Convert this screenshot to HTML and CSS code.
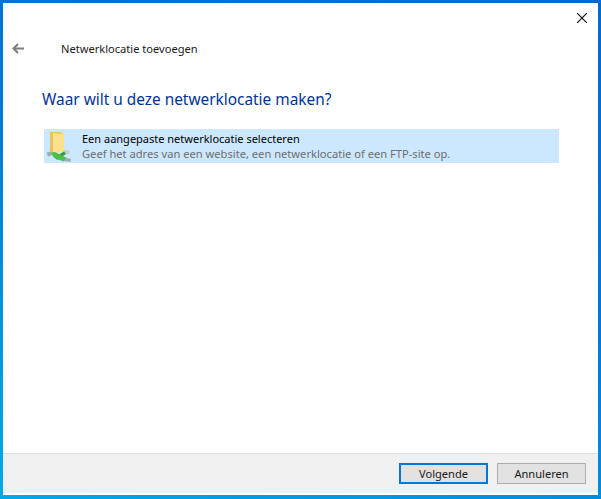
FILE: index.html
```html
<!DOCTYPE html>
<html>
<head>
    <title>Netwerklocatie toevoegen</title>
    <link rel="stylesheet" href="styles.css">
</head>
<body>
    <div class="window">
        <div class="close-row">
            <svg class="close-icon" width="10" height="10" viewBox="0 0 10 10">
                <path d="M0 0L10 10M10 0L0 10" stroke="#111" stroke-width="1.2" fill="none"/>
            </svg>
        </div>
        <div class="title-row">
            <svg class="back-icon" width="12" height="11" viewBox="0 0 12 11">
                <path d="M12 5.5H1.5M6 1L1.5 5.5L6 10" stroke="#7d7d7d" stroke-width="2" fill="none"/>
            </svg>
            <span class="title">Netwerklocatie toevoegen</span>
        </div>
        <div class="content">
            <h1>Waar wilt u deze netwerklocatie maken?</h1>
            <div class="option">
                <svg class="option-icon" width="26" height="33" viewBox="0 0 26 33">
                    <path d="M4 2H14L18 4V22H4Z" fill="#e9c25f"/>
                    <path d="M7 3L18 4V22L7 23Z" fill="#fbe08d"/>
                    <path d="M0.5 22.5L5 21.5L7 25L2 26.5Z" fill="#a3ada7"/>
                    <path d="M19 27.5L25 29L24.5 32L18 31Z" fill="#a3ada7"/>
                    <path d="M18 20L24 21L23 24L17 23.5Z" fill="#c3ccc6"/>
                    <path d="M9 27L18 21.5L20 24L11 30Z" fill="#2f9e35"/>
                    <path d="M5 22.5L9 22L20 27.5L18 31.5L8 28Z" fill="#4fbe48"/>
                </svg>
                <div class="option-text">
                    <div class="option-title">Een aangepaste netwerklocatie selecteren</div>
                    <div class="option-desc">Geef het adres van een website, een netwerklocatie of een FTP-site op.</div>
                </div>
            </div>
        </div>
        <div class="footer">
            <button class="btn btn-default" type="button">Volgende</button>
            <button class="btn" type="button">Annuleren</button>
        </div>
    </div>
</body>
</html>
```

FILE: styles.css
```css
html, body {
    height: 100%;
}

body {
    margin: 0;
    box-sizing: border-box;
    padding: 3px 3px 4px 3px;
    background: linear-gradient(200deg, #0069d0 0%, #0078d7 45%, #00a8ea 100%);
    font-family: "Noto Sans", sans-serif;
    overflow: hidden;
}

.window {
    height: 100%;
    display: flex;
    flex-direction: column;
    background-color: #fff;
}

.close-row {
    display: flex;
    justify-content: flex-end;
    padding: 10px 11px 0 0;
}

.close-icon {
    display: block;
}

.title-row {
    display: flex;
    align-items: center;
    height: 20px;
    margin-top: 15px;
    padding-left: 9px;
}

.back-icon {
    display: block;
}

.title {
    margin-left: 37px;
    font-size: 11.1px;
    color: #1a1a1a;
}

.content {
    flex: 1;
    padding: 0 39px;
}

h1 {
    margin: 31px 0 18px 0;
    font-size: 15.4px;
    line-height: 22px;
    font-weight: 400;
    color: #003399;
}

.option {
    display: flex;
    align-items: center;
    width: 515px;
    height: 34px;
    margin-left: 2px;
    background-color: #cce8ff;
}

.option-icon {
    display: block;
    margin-left: 2px;
}

.option-text {
    margin-left: 10px;
    font-size: 11px;
    line-height: 15px;
}

.option-title {
    color: #000;
}

.option-desc {
    color: #6d6d6d;
    font-size: 11.15px;
}

.footer {
    display: flex;
    justify-content: flex-end;
    gap: 9px;
    height: 42px;
    padding: 9px 12px 0 0;
    box-sizing: border-box;
    background-color: #f0f0f0;
    border-top: 1px solid #dfdfdf;
    border-bottom: 2px solid #fff;
}

.btn {
    width: 89px;
    height: 21px;
    padding: 0;
    border: 1px solid #adadad;
    background-color: #e1e1e1;
    font-family: inherit;
    font-size: 11.1px;
    color: #1a1a1a;
}

.btn-default {
    border: 2px solid #0078d7;
}
```
